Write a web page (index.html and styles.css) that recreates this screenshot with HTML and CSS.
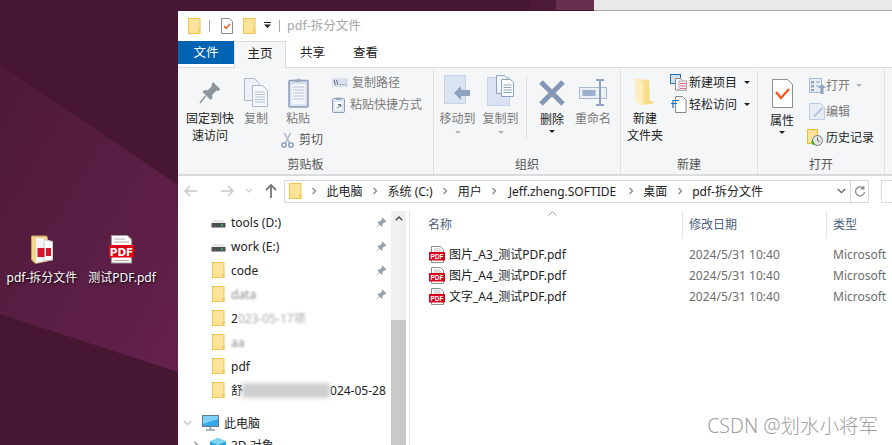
FILE: index.html
```html
<!DOCTYPE html>
<html lang="zh-CN">
<head>
<meta charset="utf-8">
<title>pdf-拆分文件</title>
<link rel="stylesheet" href="styles.css">
</head>
<body>
<svg class="defs" width="0" height="0">
  <symbol id="folder" viewBox="0 0 13 16"><rect x=".5" y=".5" width="11.5" height="15" fill="#fde39a" stroke="#eec54d"/><rect x="10" y="11" width="2.5" height="4.5" fill="#f4cf60"/></symbol>
  <symbol id="pin" viewBox="0 0 12 12"><path d="M7 .5l4.500 4.500-1.300 1-1-.4L7 8l.2 1.600L6 10.500 1.500 6l1-1.200L4 5l2.400-2-.4-1z" fill="#9aa3ab"/><path d="M3.500 8L.8 11.300" stroke="#9aa3ab"/></symbol>
  <symbol id="chev" viewBox="0 0 6 8"><path d="M1.500 1l3 3-3 3" fill="none" stroke="#8a8a8a" stroke-width="1.300"/></symbol>
  <symbol id="drive" viewBox="0 0 15 11"><path d="M2 3h11l1.500 4H.5z" fill="#e8e8e8"/><rect x=".5" y="6" width="14" height="4.500" fill="#4a4f55"/><rect x="10" y="7.500" width="2" height="1.500" fill="#4ed24e"/></symbol>
  <symbol id="pdf" viewBox="0 0 17 17"><path d="M2.500 .5h9l3 3v13h-12z" fill="#fff" stroke="#8f8f8f"/><path d="M5 3h6M5 5h7" stroke="#bbb"/><rect y="6" width="16" height="8.500" fill="#d8001a"/><text x="8" y="13" class="pdf-mini">PDF</text></symbol>
</svg>

<div class="desktop">
  <svg class="wallpaper" viewBox="0 0 892 445" preserveAspectRatio="none">
    <defs><linearGradient id="shard" x1="0" y1="0" x2="1" y2="1"><stop offset="0" stop-color="#4d1a3a"/><stop offset="1" stop-color="#65214c"/></linearGradient></defs>
    <rect width="892" height="445" fill="#471632"/>
    <path d="M0 65L178 185V372L0 314z" fill="url(#shard)"/>
    <path d="M530 0H556V10H530z" fill="#4c1a38"/>
    <path d="M556 0H594V10H556z" fill="#683050"/>
    <rect x="594" width="298" height="10" fill="#e9e9e9"/>
    <rect x="594" y="10" width="298" height="1" fill="#a8a8a8"/>
  </svg>

  <div class="desk-icon desk-folder">
    <svg width="22" height="29" viewBox="0 0 22 29"><path d="M.5 1h15l1 2v23l-12 2.500L.5 25z" fill="#f3d68e" stroke="#bfa060"/><path d="M5 2.500l9 1.500v22l-9 2z" fill="#f4f4f4"/><path d="M13 4.500l8.500 2V25L13 26z" fill="#fbfbfb" stroke="#cfcfcf"/><rect x="6.500" y="13" width="7" height="9" fill="#d8142a"/><rect x="15" y="13" width="5" height="8" fill="#d8142a"/></svg>
    <span class="desk-label">pdf-拆分文件</span>
  </div>
  <div class="desk-icon desk-pdf">
    <svg width="26" height="29" viewBox="0 0 26 29"><path d="M2.500 .5h16l4 4v23.500h-20z" fill="#fff" stroke="#9a9a9a" stroke-width="1.200"/><path d="M5 4h11M5 7h15M5 25.500h15" stroke="#aaa" stroke-width="1.200"/><rect y="10" width="25" height="12.500" fill="#e00018"/><text x="12.500" y="20.500" class="pdf-big">PDF</text></svg>
    <span class="desk-label">测试PDF.pdf</span>
  </div>

  <div class="window">
    <div class="titlebar">
      <svg class="qa-folder"><use href="#folder"/></svg>
      <i class="qa-sep"></i>
      <svg class="qa-doc" viewBox="0 0 12 16"><path d="M.5.500h8l3 3v12H.5z" fill="#fff" stroke="#8c8c8c"/><path d="M3 8l2 2.500L9 6" fill="none" stroke="#ea5a1e" stroke-width="1.300"/></svg>
      <svg class="qa-folder2"><use href="#folder"/></svg>
      <svg class="qa-caret" viewBox="0 0 7 7"><path d="M0 0h7v1H0zM0 2.500h7L3.500 6z" fill="#222"/></svg>
      <i class="qa-sep sep2"></i>
      <span class="win-title">pdf-拆分文件</span>
    </div>

    <div class="tabs">
      <div class="tab tab-file">文件</div>
      <div class="tab tab-active">主页</div>
      <div class="tab">共享</div>
      <div class="tab">查看</div>
    </div>

    <div class="ribbon">
      <section class="group g1">
        <div class="group-body">
          <div class="big w-pin">
            <div class="ico"><svg width="22" height="24" viewBox="0 0 22 24"><path d="M14 1l7.500 7.500-2.500 1.500-1.500-.5-4.500 4.500.5 3-2 2L3.500 11l2-2 3 .5L13 5l-.5-1.500z" fill="#8b959d"/><path d="M6.500 15L1 22" stroke="#8b959d" stroke-width="1.500"/></svg></div>
            <span>固定到快</span><span>速访问</span>
          </div>
          <div class="big w-copy dim">
            <div class="ico"><svg width="25" height="29" viewBox="0 0 25 29"><path d="M.5.500h10l5 5v17H.5z" fill="#eef2f8" stroke="#a9b8cf"/><path d="M8.500 7.500h10l5 5v16h-15z" fill="#f6f8fb" stroke="#a9b8cf"/><path d="M11 14h10M11 16.500h10M11 19h10M11 21.500h10M11 24h10" stroke="#b5c2d6"/></svg></div>
            <span>复制</span>
          </div>
          <div class="big w-paste dim">
            <div class="ico"><svg width="21" height="31" viewBox="0 0 21 31"><rect x="1" y="3.500" width="19" height="26.500" rx="1" fill="#d5dcea" stroke="#8d9cb6" stroke-width="1.500"/><rect x="3.500" y="7" width="14" height="20.500" fill="#f3f5f9"/><path d="M5 10h11M5 13h11M5 16h11M5 19h11M5 22h11" stroke="#bcc7d9"/><path d="M7 5V2.500h2.500L10.500 1l1 1.500H14V5z" fill="#9aa8bf"/></svg></div>
            <span>粘贴</span>
            <div class="cut"><svg width="13" height="16" viewBox="0 0 13 16"><path d="M3.500 1l5 10M9.500 1l-5 10" stroke="#a9b5c9" stroke-width="1.500"/><circle cx="3" cy="13" r="2.200" fill="none" stroke="#7e93b3" stroke-width="1.300"/><circle cx="10" cy="13" r="2.200" fill="none" stroke="#7e93b3" stroke-width="1.300"/></svg><span>剪切</span></div>
          </div>
          <div class="smalls s-clip dim">
            <div class="small"><svg width="16" height="9" viewBox="0 0 16 9"><rect width="16" height="9" fill="#d9e0ee"/><path d="M2 2l1.500 5M4.500 2L6 7" stroke="#5c6b85"/><path d="M8 6.500h1M10.500 6.500h1M13 6.500h1" stroke="#5c6b85"/></svg><span>复制路径</span></div>
            <div class="small"><svg width="14" height="16" viewBox="0 0 14 16"><rect x=".5" y="1.500" width="12" height="14" rx="1" fill="#dfe5f0" stroke="#8d9cb6"/><rect x="4" y=".5" width="5" height="2.500" fill="#9aa8bf"/><rect x="3" y="5" width="7" height="8" fill="#fff"/><path d="M5 11.500L8.500 8M6 7.500h2.800v2.800" stroke="#4d5f7d" fill="none"/></svg><span>粘贴快捷方式</span></div>
          </div>
        </div>
        <div class="group-label">剪贴板</div>
      </section>

      <section class="group g2">
        <div class="group-body">
          <div class="big w-move dim">
            <div class="ico top2"><svg width="27" height="29" viewBox="0 0 27 29"><rect x=".5" y=".5" width="21" height="28" fill="#dae3f1" stroke="#c7d3e6"/><path d="M10 18l7-7v4h9v6h-9v4z" fill="#8fa3bf"/></svg></div>
            <span>移动到</span><b class="caret grey"></b>
          </div>
          <div class="big w-copyto dim">
            <div class="ico top2"><svg width="27" height="31" viewBox="0 0 27 31"><rect x=".5" y="2.500" width="22" height="28" fill="#dae3f1" stroke="#c7d3e6"/><path d="M9.500.5h8l3 3v15h-11z" fill="#f3f5f9" stroke="#8fa3bf"/><path d="M14.500 4.500h9l3 3v14h-12z" fill="#fbfcfd" stroke="#8fa3bf"/><path d="M16.500 10h8M16.500 12.500h8M16.500 15h8M16.500 17.500h8" stroke="#8fa3bf"/></svg></div>
            <span>复制到</span><b class="caret grey"></b>
          </div>
          <i class="vsep"></i>
          <div class="big w-del">
            <div class="ico"><svg width="26" height="26" viewBox="0 0 26 26"><path d="M2 2l22 22M24 2L2 24" stroke="#8496b1" stroke-width="5"/></svg></div>
            <span>删除</span><b class="caret"></b>
          </div>
          <div class="big w-ren dim">
            <div class="ico"><svg width="29" height="27" viewBox="0 0 29 27"><rect x=".5" y="8.500" width="27" height="11" fill="#edf1f7" stroke="#a9b8cf"/><rect x="3.500" y="11" width="13" height="6" fill="#9db0cb"/><path d="M17 1h8M21 1v25M17 26h8" stroke="#8fa3bf" stroke-width="2" fill="none"/></svg></div>
            <span>重命名</span>
          </div>
        </div>
        <div class="group-label">组织</div>
      </section>

      <section class="group g3">
        <div class="group-body">
          <div class="big w-new">
            <div class="ico"><svg width="20" height="29" viewBox="0 0 20 29"><defs><linearGradient id="nf" x1="0" x2="1"><stop offset="0" stop-color="#fbe9ae"/><stop offset="1" stop-color="#f6d877"/></linearGradient></defs><path d="M0 1l14 1 1 21 4 .5-1 2-10 1.500-7-3z" fill="url(#nf)"/><path d="M1 1l7 3v23l-7-3z" fill="#fdeec0"/></svg></div>
            <span>新建</span><span>文件夹</span>
          </div>
          <div class="smalls s-new">
            <div class="small"><svg width="17" height="17" viewBox="0 0 17 17"><rect x=".5" y=".5" width="10" height="9" fill="#cfe0f3" stroke="#2f6da8"/><path d="M5.500 4.500h5l2 2V16h-7z" fill="#fff" stroke="#888"/><rect x="9" y="7" width="7.500" height="9.500" fill="#fbeff0" stroke="#b8a4b0"/><path d="M10 9.500h6M10 12h6M10 14.500h6" stroke="#d76a7c"/></svg><span>新建项目</span><b class="caret"></b></div>
            <div class="small"><svg width="17" height="17" viewBox="0 0 17 17"><path d="M5.500.5h7l3.500 3.500v12.500H5.500z" fill="#fff" stroke="#888"/><path d="M3 4.500h6M1 7.500h6M3 4v8" stroke="#1a6fb8" stroke-width="1.200" fill="none"/></svg><span>轻松访问</span><b class="caret"></b></div>
          </div>
        </div>
        <div class="group-label">新建</div>
      </section>

      <section class="group g4">
        <div class="group-body">
          <div class="big w-prop">
            <div class="ico"><svg width="21" height="29" viewBox="0 0 21 29"><path d="M.5.500h15l5 5v23H.5z" fill="#fff" stroke="#8f8f8f"/><path d="M4 13l5 6 8-9" fill="none" stroke="#f2591c" stroke-width="2.400"/></svg></div>
            <span>属性</span><b class="caret"></b>
          </div>
          <div class="smalls s-open">
            <div class="small dim indent"><svg width="17" height="16" viewBox="0 0 17 16"><rect x=".5" y=".5" width="12" height="14" fill="#e8edf5" stroke="#a9b8cf"/><path d="M2 3h3v2.500H2zM2 7h3v2.500H2zM2 11h3v2H2z" fill="#8fa3bf"/><path d="M7 4h4M7 8h4" stroke="#8fa3bf"/><path d="M13 6l4 4h-2.500v6h-3v-6H9z" fill="#8fa3bf"/></svg><span>打开</span><b class="caret grey"></b></div>
            <div class="small dim indent"><svg width="17" height="17" viewBox="0 0 17 17"><path d="M.5.500h11l4 4v12H.5z" fill="#e8edf5" stroke="#c0cde0"/><path d="M4 13L13 4l1.500 1.500-9 9z" fill="#b9c7dc"/></svg><span>编辑</span></div>
            <div class="small"><svg width="16" height="17" viewBox="0 0 16 17"><rect x=".5" y=".5" width="10" height="14" fill="#fde39a" stroke="#e6bc44"/><circle cx="10.500" cy="11.500" r="5" fill="#e6e6e6" stroke="#777"/><path d="M10.500 8.500v3l2 1" stroke="#555" fill="none"/><path d="M6 11a5 5 0 0 0 3 4.500L6 16 4 12.500z" fill="#35a82c"/></svg><span>历史记录</span></div>
          </div>
        </div>
        <div class="group-label">打开</div>
      </section>
    </div>

    <div class="addrrow">
      <div class="navbtns">
        <svg width="14" height="12" viewBox="0 0 14 12"><path d="M6 1L1 6l5 5M1 6h12" fill="none" stroke="#c8c8c8" stroke-width="1.500"/></svg>
        <svg width="14" height="12" viewBox="0 0 14 12"><path d="M8 1l5 5-5 5M13 6H1" fill="none" stroke="#c8c8c8" stroke-width="1.500"/></svg>
        <svg width="8" height="6" viewBox="0 0 8 6"><path d="M1 1l3 3 3-3" fill="none" stroke="#cfcfcf" stroke-width="1.200"/></svg>
        <svg width="12" height="14" viewBox="0 0 12 14"><path d="M1 6l5-5 5 5M6 1v13" fill="none" stroke="#777" stroke-width="1.800"/></svg>
      </div>
      <div class="addrbox">
        <svg class="addr-folder"><use href="#folder"/></svg>
        <svg class="chev"><use href="#chev"/></svg><span>此电脑</span>
        <svg class="chev"><use href="#chev"/></svg><span>系统 (C:)</span>
        <svg class="chev"><use href="#chev"/></svg><span>用户</span>
        <svg class="chev"><use href="#chev"/></svg><span class="seg-user">Jeff.zheng.SOFTIDE</span>
        <svg class="chev"><use href="#chev"/></svg><span>桌面</span>
        <svg class="chev"><use href="#chev"/></svg><span>pdf-拆分文件</span>
        <svg class="addr-drop" width="9" height="6" viewBox="0 0 9 6"><path d="M.8 1l3.700 3.700L8.200 1" fill="none" stroke="#666" stroke-width="1.300"/></svg>
      </div>
      <div class="refresh"><svg width="12" height="13" viewBox="0 0 12 13"><path d="M9.500 3.500A4.500 4.500 0 1 0 10.500 7M9.800 .8v3H6.800" fill="none" stroke="#888" stroke-width="1.300"/></svg></div>
      <div class="searchbox"></div>
    </div>

    <div class="main">
      <nav class="nav">
        <div class="nav-list">
          <div class="row"><svg class="ic-drive"><use href="#drive"/></svg><span>tools (D:)</span><svg class="ic-pin"><use href="#pin"/></svg></div>
          <div class="row"><svg class="ic-drive"><use href="#drive"/></svg><span>work (E:)</span><svg class="ic-pin"><use href="#pin"/></svg></div>
          <div class="row"><svg class="ic-folder"><use href="#folder"/></svg><span>code</span><svg class="ic-pin"><use href="#pin"/></svg></div>
          <div class="row"><svg class="ic-folder"><use href="#folder"/></svg><span class="blur b-data">data</span><svg class="ic-pin"><use href="#pin"/></svg></div>
          <div class="row"><svg class="ic-folder"><use href="#folder"/></svg><span>2</span><span class="blur b-long">023-05-17项</span></div>
          <div class="row"><svg class="ic-folder"><use href="#folder"/></svg><span class="blur b-data">aa</span></div>
          <div class="row"><svg class="ic-folder"><use href="#folder"/></svg><span>pdf</span></div>
          <div class="row"><svg class="ic-folder"><use href="#folder"/></svg><span>舒</span><i class="smear"></i><span>024-05-28</span></div>
          <div class="row pc"><svg class="pc-chev" width="9" height="6" viewBox="0 0 9 6"><path d="M.8 1l3.700 3.700L8.200 1" fill="none" stroke="#c4c4c4" stroke-width="1.200"/></svg><svg width="17" height="16" viewBox="0 0 17 16"><rect x=".5" y=".5" width="16" height="11" fill="#36a8ea" stroke="#5f7d92"/><path d="M1 1h15v3L1 9z" fill="#7fd0f7"/><path d="M4 15h9M8.500 12v3" stroke="#8aa0b0" stroke-width="1.500"/></svg><span>此电脑</span></div>
          <div class="row obj"><svg class="obj-chev" width="6" height="8"><use href="#chev"/></svg><svg width="16" height="14" viewBox="0 0 16 14"><path d="M8 0l8 3.500v7L8 14l-8-3.500v-7z" fill="#2ea3d8"/><path d="M8 0l8 3.500L8 7 0 3.500z" fill="#7fd4f3"/></svg><span>3D 对象</span></div>
        </div>
        <div class="scrollbar">
          <div class="scroll-up"><svg width="8" height="5" viewBox="0 0 8 5"><path d="M.8 4.200L4 1l3.200 3.200" fill="none" stroke="#444" stroke-width="1.300"/></svg></div>
          <div class="scroll-thumb"></div>
        </div>
      </nav>

      <div class="files">
        <div class="head">
          <div class="col c-name">名称<svg class="sort" width="9" height="5" viewBox="0 0 9 5"><path d="M.5 4.500l4-4 4 4" fill="none" stroke="#a0a0a0"/></svg></div>
          <div class="col c-date">修改日期</div>
          <div class="col c-type">类型</div>
        </div>
        <div class="frow"><div class="c-name cell"><svg class="ic-pdf"><use href="#pdf"/></svg>图片_A3_测试PDF.pdf</div><div class="c-date cell soft">2024/5/31 10:40</div><div class="c-type cell soft">Microsoft</div></div>
        <div class="frow"><div class="c-name cell"><svg class="ic-pdf"><use href="#pdf"/></svg>图片_A4_测试PDF.pdf</div><div class="c-date cell soft">2024/5/31 10:40</div><div class="c-type cell soft">Microsoft</div></div>
        <div class="frow"><div class="c-name cell"><svg class="ic-pdf"><use href="#pdf"/></svg>文字_A4_测试PDF.pdf</div><div class="c-date cell soft">2024/5/31 10:40</div><div class="c-type cell soft">Microsoft</div></div>
      </div>
    </div>
  </div>

  <div class="watermark">CSDN @划水小将军</div>
</div>
</body>
</html>
```
FILE: styles.css
```css
* { box-sizing: border-box; }
html, body { margin: 0; height: 100%; overflow: hidden; }
body { font: 12px/17px "Noto Sans", "Noto Sans CJK SC", sans-serif; color: #222; }
svg { display: block; flex: none; overflow: hidden; }
.defs { display: none; }
.pdf-mini { font: 700 6.500px "Liberation Sans", sans-serif; fill: #fff; text-anchor: middle; }
.pdf-big { font: 700 10.500px "DejaVu Sans", sans-serif; fill: #fff; text-anchor: middle; }

.desktop { position: relative; width: 892px; height: 445px; overflow: hidden; }
.wallpaper { position: absolute; inset: 0; width: 892px; height: 445px; }

.desk-icon { position: absolute; top: 235px; width: 80px; display: flex; flex-direction: column; align-items: center; gap: 5px; }
.desk-folder { left: 2px; }
.desk-pdf { left: 82px; }
.desk-label { color: #fff; white-space: nowrap; text-shadow: 1px 1px 2px #000; }

.window { position: absolute; left: 178px; top: 11px; width: 714px; height: 434px; background: #fff; display: flex; flex-direction: column; overflow: hidden; }

.titlebar { height: 30px; display: flex; align-items: center; flex: none; }
.titlebar svg { margin-top: -1px; }
.qa-folder { width: 13px; height: 16px; margin-left: 10px; }
.qa-sep { width: 1px; height: 12px; background: #a8a8a8; margin-left: 8px; }
.qa-doc { width: 12px; height: 16px; margin-left: 11px; }
.qa-folder2 { width: 13px; height: 16px; margin-left: 10px; }
.qa-caret { width: 7px; height: 7px; margin-left: 8px; }
.sep2 { margin-left: 8px; }
.win-title { margin-left: 7px; margin-top: -1px; color: #a6a6a6; font-size: 12.500px; }

.tabs { height: 26px; display: flex; flex: none; align-items: flex-start; }
.tab { width: 53px; height: 23px; line-height: 23px; text-align: center; font-size: 12.500px; }
.tab-file { width: 56px; background: #0063b1; color: #fff; }
.tab-active { width: 52px; height: 27px; background: #f5f6f7; border: 1px solid #dadbdc; border-bottom: 0; position: relative; z-index: 1; line-height: 24px; }

.ribbon { height: 109px; flex: none; background: #f5f6f7; border-top: 1px solid #dadbdc; border-bottom: 2px solid #dadbdc; display: flex; padding-top: 2px; }
.group { display: flex; flex-direction: column; border-right: 1px solid #dfe1e3; height: 104px; flex: none; }
.g1 { width: 256px; }
.g2 { width: 187px; }
.g3 { width: 137px; }
.g4 { width: 127px; }
.group-body { display: flex; flex: 1; padding-top: 5px; min-height: 0; position: relative; }
.group-label { height: 17px; margin-bottom: 1px; text-align: center; color: #555; }

.big { display: flex; flex-direction: column; align-items: center; white-space: nowrap; flex: none; }
.ico { height: 35px; display: flex; align-items: center; justify-content: center; }
.top2 { align-items: flex-start; }
.dim { color: #7a7a7a; }
.caret { display: block; width: 0; height: 0; border: 3.500px solid transparent; border-top-color: #222; border-bottom: 0; margin-top: 4px; }
.caret.grey { border-top-color: #b5b5b5; }

.g1 .group-body { padding-left: 4px; }
.w-pin { width: 56px; }
.w-copy { width: 38px; margin-left: -1px; }
.w-paste { width: 46px; position: relative; }
.cut { display: flex; align-items: center; gap: 5px; margin-top: 4px; margin-left: 8px; }
.cut span { color: #555; }
.smalls { display: flex; flex-direction: column; }
.small { display: flex; align-items: center; gap: 4px; white-space: nowrap; }
.small .caret { margin: 0 0 0 5px; }
.s-clip { margin-left: 11px; gap: 5px; }
.s-clip .small { height: 17px; }
.s-clip .small:first-child { margin-top: -1px; }

.g2 .group-body { padding-left: 2px; }
.w-move { width: 43px; }
.w-copyto { width: 43px; }
.vsep { width: 1px; height: 64px; background: #dfe1e3; margin: 0 4px 0 4px; }
.w-del { width: 42px; }
.w-del .ico { height: 36px; }
.w-ren { width: 42px; margin-left: -1px; }
.w-del .caret, .w-prop .caret { margin-top: 2px; }

.g3 .group-body { padding-left: 3px; }
.w-new { width: 42px; }
.s-new { margin-left: 4px; margin-top: -1px; gap: 5px; }
.s-new .small { height: 17px; gap: 2px; }

.g4 .group-body { padding-left: 4px; }
.w-prop { width: 40px; }
.w-prop .ico { height: 37px; }
.s-open { margin-left: 5px; margin-top: 2px; gap: 9px; }
.s-open .small { height: 17px; gap: 3px; }
.s-open .indent { margin-left: 2px; gap: 0; }
.s-open .caret { margin-left: 6px; }

.addrrow { height: 30px; flex: none; display: flex; align-items: center; }
.navbtns { width: 106px; flex: none; display: flex; align-items: center; padding-left: 6px; }
.navbtns svg:nth-child(2) { margin-left: 22px; }
.navbtns svg:nth-child(3) { margin-left: 11px; }
.navbtns svg:nth-child(4) { margin-left: 12px; }
.addrbox { width: 567px; height: 23px; flex: none; border: 1px solid #d9d9d9; display: flex; align-items: center; padding-left: 4px; white-space: nowrap; }
.addr-folder { width: 13px; height: 16px; margin-right: 9px; }
.chev { width: 6px; height: 8px; margin: 0 9.500px; }
.addrbox .chev:nth-of-type(2) { margin-left: 0; }
.seg-user { margin: 0 2px 0 2px; }
.addr-drop { margin-left: auto; margin-right: 4px; }
.refresh { width: 18px; height: 23px; flex: none; border: 1px solid #d9d9d9; border-left: 0; display: flex; align-items: center; justify-content: center; }
.searchbox { width: 20px; height: 23px; flex: none; border: 1px solid #d9d9d9; margin-left: 12px; }

.main { flex: 1; min-height: 0; display: flex; padding-top: 5px; }
.nav { width: 232px; flex: none; display: flex; border-right: 1px solid #e6e6e6; }
.nav-list { width: 213px; flex: none; margin-top: -1px; }
.scrollbar { width: 15px; background: #f0f0f0; display: flex; flex-direction: column; }
.scroll-up { height: 15px; display: flex; justify-content: center; align-items: center; }
.scroll-thumb { margin-top: 94px; flex: 1; background: #c9c9c9; }
.row { height: 24px; display: flex; align-items: center; padding: 0 4px 0 33px; white-space: nowrap; }
.ic-drive { width: 15px; height: 11px; margin-right: 5px; }
.ic-folder { width: 13px; height: 16px; margin: 0 6px 0 1px; }
.ic-pin { width: 11px; height: 11px; margin-left: auto; }
.blur { filter: blur(1.300px); color: #888; }
.b-long { color: #aaa; }
.smear { display: block; width: 88px; height: 15px; background: #cfcfcf; filter: blur(2px); margin-left: -1px; }
.pc { padding-left: 5px; margin-top: 9px; }
.pc-chev { margin-right: 10px; }
.pc span { margin-left: 5px; }
.obj { padding-left: 15px; height: 22px; margin-top: -1px; }
.obj-chev { margin-right: 11px; }
.obj span { margin-left: 5px; }

.files { flex: 1; min-width: 0; overflow: hidden; }
.head { display: flex; height: 27px; align-items: center; margin-bottom: 6px; }
.col { height: 27px; line-height: 27px; color: #4c607a; padding-left: 6px; border-right: 1px solid #e5e5e5; position: relative; }
.col.c-type { border-right: 0; }
.col.c-name { padding-left: 18px; }
.sort { position: absolute; left: 138px; top: 0; }
.c-name { width: 273px; flex: none; }
.c-date { width: 144px; flex: none; }
.c-type { flex: none; width: 70px; }
.frow { display: flex; height: 21px; align-items: center; }
.cell { display: flex; align-items: center; white-space: nowrap; padding-left: 6px; }
.cell.c-name { padding-left: 19px; }
.ic-pdf { width: 17px; height: 17px; margin-right: 3px; }
.soft { color: #6d6d6d; }

.watermark { position: absolute; right: 14px; bottom: 8px; font: 300 19.500px/22px "Noto Sans", "Noto Sans CJK SC", sans-serif; color: #a0a0a0; white-space: nowrap; }
```
